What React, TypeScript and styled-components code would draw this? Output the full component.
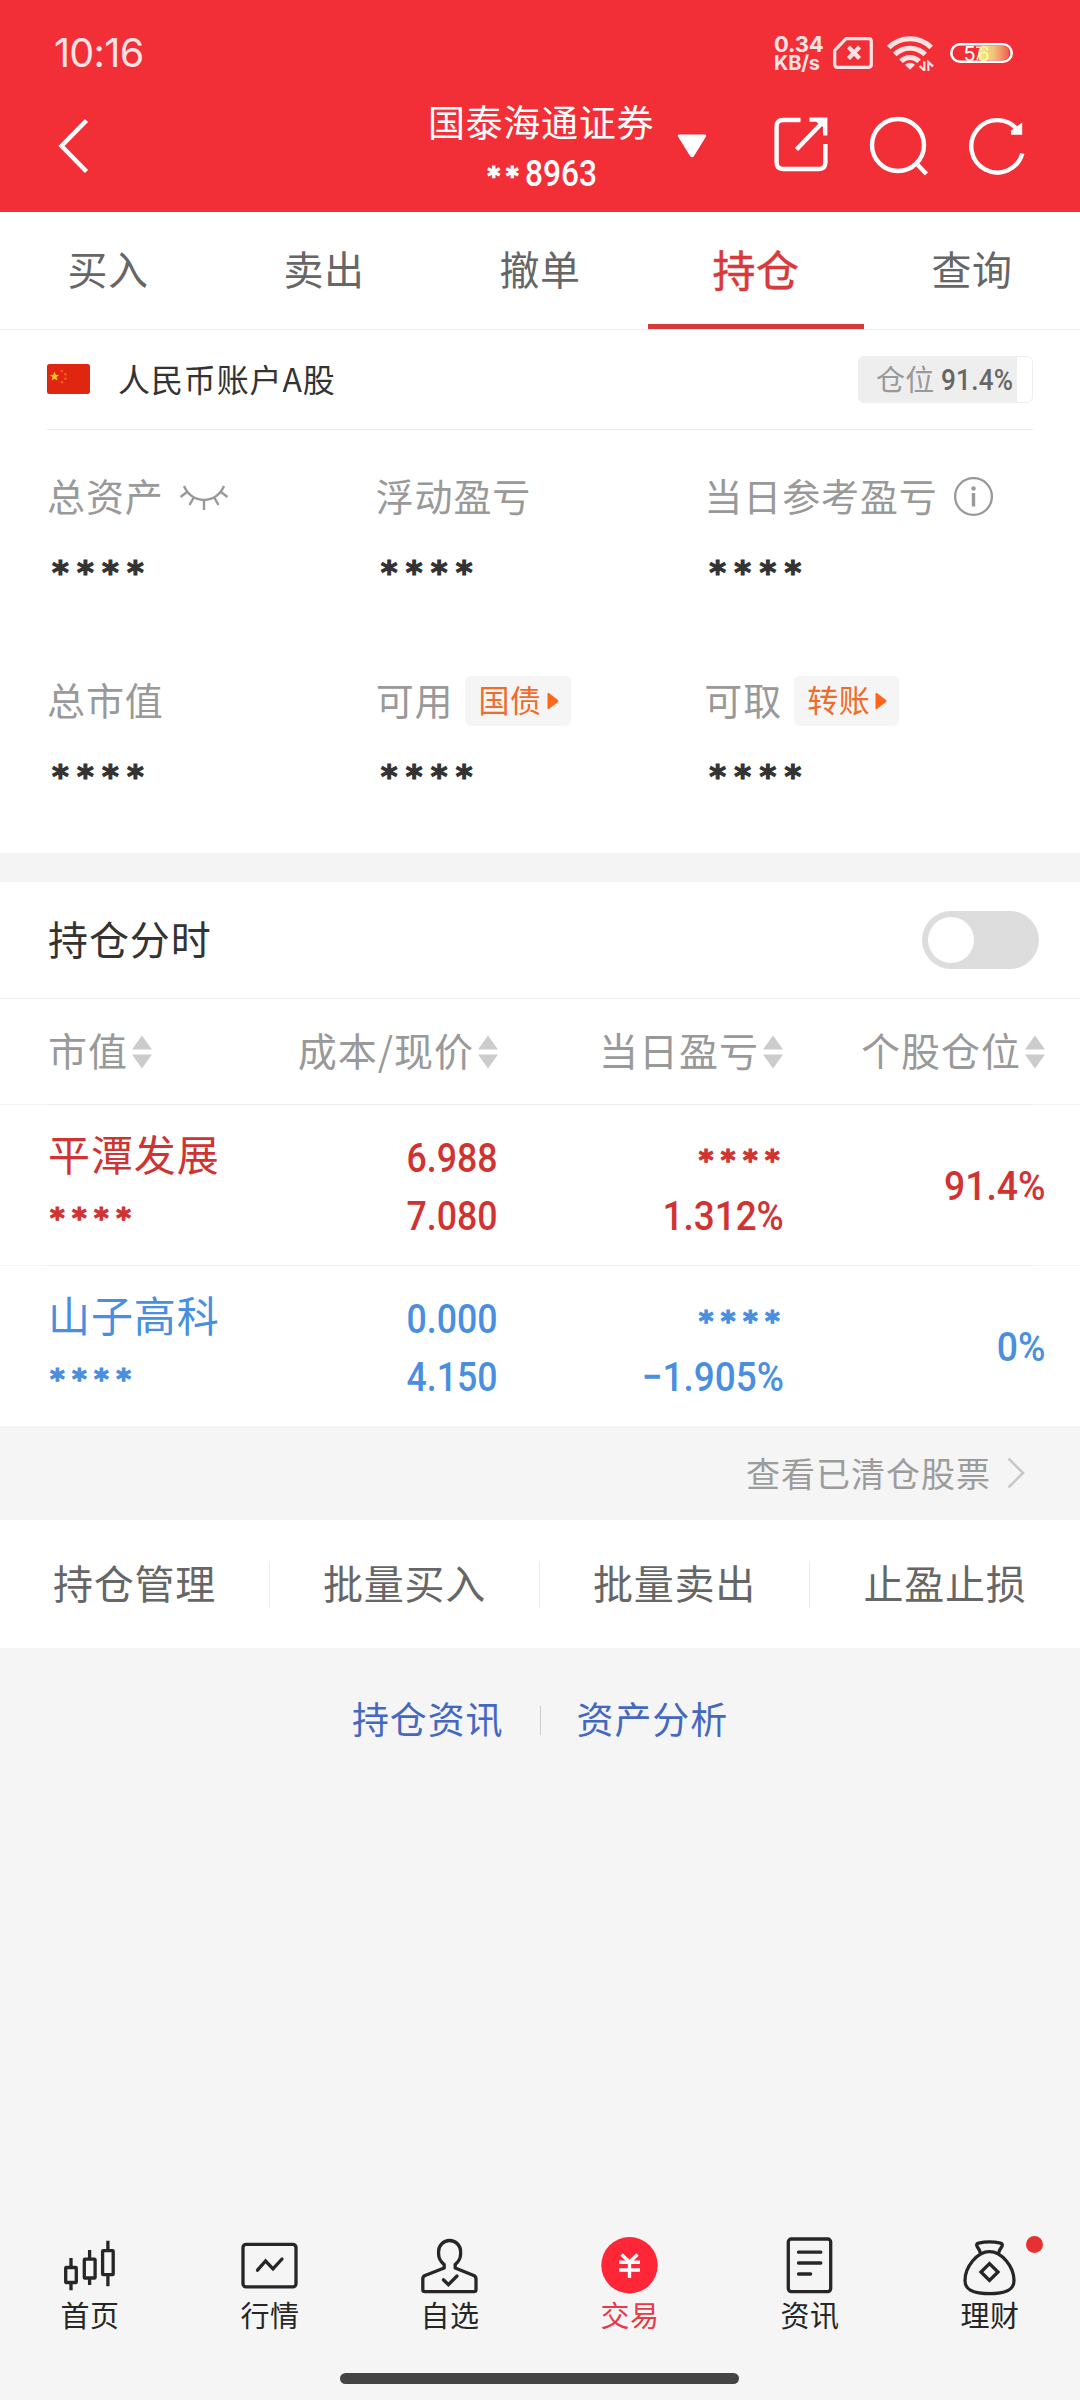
import React from "react";
import styled, { createGlobalStyle } from "styled-components";

const CJK = '"Noto Sans CJK SC", sans-serif';
const UI = 'Inter, "Noto Sans CJK SC", sans-serif';
const DIGITS = 'Roboto, "Noto Sans CJK SC", sans-serif';

const GlobalStyle = createGlobalStyle`
  * { box-sizing: border-box; }
  body { margin: 0; background: #f5f5f5; font-family: ${CJK}; font-weight: 400; }
  svg { display: block; flex: none; }
`;

const Page = styled.div`
  width: 1080px;
  height: 2400px;
  display: flex;
  flex-direction: column;
  background: #f5f5f5;
  white-space: nowrap;
`;

/* ---------- header ---------- */
const Header = styled.header`
  height: 212px;
  background: #f22f37;
  color: #fff;
`;
const StatusBar = styled.div`
  height: 80px;
  padding: 27px 67px 0 54px;
  display: flex;
  justify-content: space-between;
  color: #ffe3e4;
  font-family: ${UI};
`;
const Clock = styled.span`
  font-size: 39.5px;
  line-height: 52px;
  letter-spacing: -0.7px;
`;
const StatusIcons = styled.div`
  display: flex;
  height: 52px;
  align-items: center;
  padding-bottom: 1px;
`;
const Speed = styled.div`
  display: flex;
  flex-direction: column;
  width: 59px;
  font-weight: 700;
  padding-top: 2px;
`;
const SpeedValue = styled.span`
  font-size: 22px;
  line-height: 19px;
  letter-spacing: -0.2px;
`;
const SpeedUnit = styled.span`
  font-size: 20px;
  line-height: 19px;
  letter-spacing: -0.2px;
`;
const TitleBar = styled.div`
  height: 132px;
  display: grid;
  grid-template-columns: 430px 222px 1fr;
  align-items: center;
`;
const BackSlot = styled.div`
  padding-left: 56px;
`;
const Titles = styled.div`
  display: flex;
  flex-direction: column;
  align-items: center;
  height: 132px;
  padding-top: 16px;
`;
const Broker = styled.span`
  font-size: 37px;
  line-height: 50px;
  letter-spacing: 0.7px;
`;
const AccountNo = styled.span`
  display: flex;
  align-items: center;
  font-family: ${DIGITS};
  font-size: 36px;
  line-height: 50px;
  font-weight: 500;
  margin-top: 3px;
  padding-left: 12px;
`;
const HeadActions = styled.div`
  display: flex;
  align-items: center;
  padding-left: 25px;
`;
const ActionIcons = styled.div`
  display: flex;
  gap: 40px;
  margin-left: 67px;
`;

/* ---------- text helpers ---------- */
const Stars = styled.span<{ $size: number; $gap: number }>`
  display: block;
  font-family: "DejaVu Sans", sans-serif;
  font-weight: 700;
  font-size: ${(p) => p.$size}px;
  line-height: 1;
  letter-spacing: ${(p) => p.$gap}px;
  padding-top: 0.2em;
  -webkit-text-stroke: 1.2px currentColor;
`;
const Narrow = styled.span<{ $from?: string; $scale?: number }>`
  display: inline-block;
  font-family: ${DIGITS};
  font-weight: 500;
  transform: scaleX(${(p) => p.$scale ?? 0.87});
  transform-origin: ${(p) => p.$from ?? "right"} center;
`;

/* ---------- tabs ---------- */
const Tabs = styled.nav`
  height: 118px;
  display: grid;
  grid-template-columns: repeat(5, 216px);
  background: #fff;
  border-bottom: 1px solid #ebebeb;
`;
const Tab = styled.div<{ $active?: boolean }>`
  display: flex;
  align-items: center;
  justify-content: center;
  padding-bottom: 1px;
  border-bottom: 5px solid ${(p) => (p.$active ? "#d73a3a" : "transparent")};
  color: ${(p) => (p.$active ? "#d73a3a" : "#666")};
  font-size: ${(p) => (p.$active ? 43 : 40)}px;
  letter-spacing: 0.6px;
  -webkit-text-stroke: ${(p) => (p.$active ? 0.5 : 0)}px currentColor;
`;

/* ---------- account ---------- */
const Account = styled.section`
  height: 523px;
  background: #fff;
  padding: 0 47px;
`;
const AccountHead = styled.div`
  height: 100px;
  display: flex;
  align-items: center;
  border-bottom: 1px solid #ebebeb;
`;
const AccountName = styled.span`
  margin-left: 27px;
  font-size: 32px;
  line-height: 44px;
  letter-spacing: 0.9px;
  color: #333;
  padding-bottom: 4px;
`;
const Position = styled.div<{ $fill: number }>`
  margin-left: auto;
  width: 175px;
  height: 47px;
  border: 1px solid #eee;
  border-radius: 6px;
  background: linear-gradient(to right, #eee ${(p) => p.$fill}%, #fff ${(p) => p.$fill}%);
  display: flex;
  align-items: center;
  padding: 0 0 3px 17px;
  font-size: 29px;
  letter-spacing: 0.3px;
  color: #999;
`;
const PositionValue = styled(Narrow)`
  margin-left: 6px;
  font-size: 30px;
  color: #666;
  padding-top: 2px;
`;
const Metrics = styled.div`
  display: grid;
  grid-template-columns: repeat(3, 1fr);
  grid-auto-rows: 204px;
  padding-top: 42px;
`;
const MetricLabel = styled.div`
  height: 50px;
  display: flex;
  align-items: center;
  font-size: 38px;
  letter-spacing: 0.9px;
  line-height: 50px;
  color: #999;
`;
const LabelText = styled.span`
  padding-bottom: 4px;
`;
const HeadText = styled.span`
  padding-bottom: 6px;
`;
const ClearedText = styled.span`
  padding-bottom: 2px;
`;
const MetricValue = styled.div`
  height: 50px;
  margin-top: 22px;
  padding-left: 5px;
  display: flex;
  align-items: center;
  color: #333;
`;
const IconAfter = styled.span<{ $gap: number }>`
  margin-left: ${(p) => p.$gap}px;
`;
const Chip = styled.span`
  height: 50px;
  margin-left: 12px;
  padding: 0 12px 0 13px;
  display: inline-flex;
  align-items: center;
  gap: 5px;
  border-radius: 6px;
  background: #f5f5f5;
  color: #ee6c2c;
  font-size: 31px;
  letter-spacing: 0.6px;
`;
const Gap = styled.div`
  height: 29px;
  background: #f4f4f4;
`;

/* ---------- holdings ---------- */
const MinuteRow = styled.div`
  height: 117px;
  background: #fff;
  border-bottom: 1px solid #ebebeb;
  display: flex;
  align-items: center;
  justify-content: space-between;
  padding: 0 41px 0 48px;
  font-size: 40px;
  letter-spacing: 0.9px;
  color: #333;
`;
const Switch = styled.div`
  width: 117px;
  height: 58px;
  border-radius: 29px;
  background: #ddd;
  padding: 6px;
`;
const Knob = styled.div`
  width: 46px;
  height: 46px;
  border-radius: 50%;
  background: #fff;
`;
const TableRow = styled.div<{ $h: number; $tone?: string }>`
  height: ${(p) => p.$h}px;
  display: grid;
  grid-template-columns: 230px 220px 285px 262px;
  padding-left: 48px;
  background: #fff;
  color: ${(p) => p.$tone ?? "#999"};
`;
const Rule = styled.div`
  height: 1px;
  background: linear-gradient(to right, #f4f4f4 47px, #ebebeb 47px, #ebebeb 1033px, #f4f4f4 1033px);
`;
const HeadCell = styled.div<{ $left?: boolean }>`
  display: flex;
  align-items: center;
  justify-content: ${(p) => (p.$left ? "flex-start" : "flex-end")};
  gap: 4px;
  font-size: 39px;
  letter-spacing: 1px;
`;
const Cell = styled.div<{ $left?: boolean; $mid?: boolean }>`
  display: flex;
  flex-direction: column;
  align-items: ${(p) => (p.$left ? "flex-start" : "flex-end")};
  justify-content: ${(p) => (p.$mid ? "center" : "flex-start")};
  padding-top: ${(p) => (p.$mid ? 2 : 24)}px;
`;
const Line = styled.div<{ $padL?: number; $shift?: number }>`
  height: 58px;
  display: flex;
  align-items: center;
  padding-left: ${(p) => p.$padL ?? 0}px;
  margin-right: ${(p) => -(p.$shift ?? 0)}px;
  font-size: 41px;
`;
const StockName = styled.span`
  font-size: 42px;
  line-height: 58px;
  letter-spacing: 0.9px;
  padding-bottom: 10px;
`;
const Cleared = styled.div`
  height: 94px;
  display: flex;
  align-items: center;
  justify-content: flex-end;
  gap: 16px;
  padding-right: 55px;
  font-size: 34px;
  letter-spacing: 1px;
  color: #9c9c9c;
`;
const Actions = styled.div`
  height: 128px;
  display: grid;
  grid-template-columns: repeat(4, 270px);
  align-items: center;
  background: #fff;
`;
const Action = styled.div`
  height: 47px;
  line-height: 42px;
  text-align: center;
  font-size: 40px;
  letter-spacing: 0.8px;
  color: #666;
  border-right: 1px solid #ebebeb;
  &:last-child { border-right: 0; }
`;
const Links = styled.div`
  height: 144px;
  display: flex;
  align-items: center;
  justify-content: center;
  gap: 36px;
  color: #4468bf;
  font-size: 37px;
  letter-spacing: 0.9px;
`;
const LinkDivider = styled.div`
  width: 1px;
  height: 29px;
  background: #ccc;
`;

/* ---------- bottom bar ---------- */
const Spacer = styled.div`
  flex: 1;
`;
const BottomNav = styled.nav`
  height: 137px;
  display: grid;
  grid-template-columns: repeat(6, 180px);
`;
const NavItem = styled.div<{ $active?: boolean }>`
  position: relative;
  display: flex;
  flex-direction: column;
  align-items: center;
  color: ${(p) => (p.$active ? "#e8394a" : "#262626")};
  font-size: 29px;
  line-height: 32px;
  letter-spacing: 0.4px;
`;
const Dot = styled.span`
  position: absolute;
  left: 126px;
  top: 0;
  width: 17px;
  height: 17px;
  border-radius: 50%;
  background: #e63032;
`;
const HomeBar = styled.div`
  width: 399px;
  height: 11px;
  margin: 0 0 16px 340px;
  border-radius: 6px;
  background: #444;
`;

/* ---------- drawings ---------- */
const SortIcon = () => (
  <svg width="20" height="34" viewBox="0 0 20 34" fill="#ccc">
    <path d="M10 0.5 20 14.5H0Z" />
    <path d="M0 19.5H20L10 33.5Z" />
  </svg>
);

const SimIcon = () => (
  <svg width="40" height="32" viewBox="0 0 40 32" fill="none" stroke="currentColor" strokeWidth="3.2">
    <path d="M13 1.7H35.5Q38.3 1.7 38.3 4.5V27.5Q38.3 30.3 35.5 30.3H4.5Q1.7 30.3 1.7 27.5V13.5Z" strokeLinejoin="round" />
    <path d="M15.5 10 26.5 21.5M26.5 10 15.5 21.5" strokeWidth="4.2" />
  </svg>
);

const WifiIcon = () => (
  <svg width="47" height="36" viewBox="0 0 47 36" fill="none" stroke="currentColor" strokeWidth="5">
    <path d="M1.8 12.6A30 30 0 0 1 44.2 12.6" />
    <path d="M7.8 19.5A21.5 21.5 0 0 1 38.2 19.5" />
    <path d="M14 26.2A12.6 12.6 0 0 1 32 26.2" />
    <path d="M23 34.8 18 29.8A7 7 0 0 1 28 29.8Z" fill="currentColor" stroke="none" />
    <path d="M37.3 26.5V35.4L32.5 31M41.3 36V27L46 31.4" strokeWidth="2.2" />
  </svg>
);

const BatteryIcon = () => (
  <svg width="63" height="36" viewBox="0 -8 63 36">
    <defs>
      <linearGradient id="charge" x1="0" x2="1">
        <stop offset="0" stopColor="#f2eb8c" />
        <stop offset="0.5" stopColor="#f0c479" />
        <stop offset="1" stopColor="#f0604f" />
      </linearGradient>
    </defs>
    <path d="M33 3H53Q59 3.5 59 10T53 17H28.5Z" fill="url(#charge)" />
    <path d="M26 4.2H32L27 16.6" fill="none" stroke="#fff" strokeWidth="1.6" />
    <rect x="1.3" y="1.3" width="60.4" height="17.4" rx="8.7" fill="none" stroke="#fff" strokeWidth="2.6" />
    <text x="13.5" y="17.6" fontFamily="Inter, sans-serif" fontSize="20" letterSpacing="1.6" fill="#fff">
      5<tspan fill="#f4ff9c">6</tspan>
    </text>
  </svg>
);

const BackIcon = () => (
  <svg width="34" height="56" viewBox="0 0 34 56" fill="none" stroke="#fff" strokeWidth="4.4">
    <path d="M30.5 2.5 5.5 28 30.5 53.5" />
  </svg>
);

const ShareIcon = () => (
  <svg width="54" height="56" viewBox="0 0 54 56" fill="none" stroke="#fff" strokeWidth="4.4">
    <path d="M26.5 4H9Q2.6 4 2.6 10.4V46.6Q2.6 53 9 53H45Q51.4 53 51.4 46.6V28" />
    <path d="M22.5 33.5 47.5 7.5" />
    <path d="M35.5 1.6H53.4V19.5H49V11L42 5.8H35.5Z" fill="#fff" stroke="none" />
  </svg>
);

const SearchIcon = () => (
  <svg width="60" height="60" viewBox="0 0 60 60" fill="none" stroke="#fff" strokeWidth="4.4">
    <circle cx="30" cy="29" r="26" />
    <path d="M47.5 46.5 58.5 58" />
  </svg>
);

const RefreshIcon = () => (
  <svg width="58" height="60" viewBox="0 0 58 60" fill="none" stroke="#fff" strokeWidth="4.4">
    <path d="M54.3 37.5A26 26.2 0 1 1 50 14.5" />
    <path d="M54.2 6.5V18.8H43V14.6Z" fill="#fff" stroke="none" />
  </svg>
);

const CaretIcon = () => (
  <svg width="30" height="24" viewBox="0 0 30 24">
    <path d="M2.3 0.5H27.7Q30 0.7 28.7 3L17 22Q15 24.6 13 22L1.3 3Q0 0.7 2.3 0.5Z" fill="#fff" />
  </svg>
);

const FlagIcon = () => (
  <svg width="44" height="32" viewBox="0 0 44 32">
    <rect x="0" width="43" height="30" rx="2.5" fill="#e02611" />
    <path d="M7.5 7.4 8.8 10.8 12 11 9.5 13.2 10.4 16.6 7.5 14.7 4.6 16.6 5.5 13.2 3 11 6.2 10.8Z" fill="#fcc419" />
    <g fill="#f2601c">
      <circle cx="14.8" cy="7" r="1.3" />
      <circle cx="18.4" cy="10.3" r="1.3" />
      <circle cx="18.4" cy="14.8" r="1.3" />
      <circle cx="15" cy="18.2" r="1.3" />
    </g>
  </svg>
);

const EyeClosedIcon = () => (
  <svg width="50" height="28" viewBox="0 0 50 28" fill="none" stroke="#999" strokeWidth="2.4">
    <path d="M5 3Q11 16.5 25 17Q39 16.5 45 3" />
    <path d="M8 9 1.5 14M42 9 48.5 14M14.5 15 10.5 22M35.5 15 39.5 22M25 17V27" />
  </svg>
);

const InfoIcon = () => (
  <svg width="40" height="40" viewBox="0 0 40 40" fill="none" stroke="#999">
    <circle cx="20.5" cy="19.5" r="18.4" strokeWidth="2.3" />
    <path d="M20.5 16V29.5" strokeWidth="3.4" />
    <circle cx="20.5" cy="11.5" r="2.2" fill="#999" stroke="none" />
  </svg>
);

const PlayIcon = () => (
  <svg width="12" height="18" viewBox="0 0 12 18">
    <path d="M0.5 2Q0.5 0 2.2 1.3L11 8Q12 9 11 10L2.2 16.8Q0.5 18 0.5 16Z" fill="#ff661a" />
  </svg>
);

const ChevronIcon = () => (
  <svg width="18" height="32" viewBox="0 0 18 32" fill="none" stroke="#c8c8c8" strokeWidth="2.6">
    <path d="M1.5 1.5 16 16 1.5 30.5" />
  </svg>
);

const NavSvg = ({ children }: { children: React.ReactNode }) => (
  <svg width="64" height="62" viewBox="0 0 64 62" fill="none" stroke="#262626" strokeWidth="3.3" strokeLinejoin="round" strokeLinecap="round">
    {children}
  </svg>
);

const CandlesIcon = () => (
  <NavSvg>
    <g strokeLinecap="butt">
      <rect x="7.7" y="31.5" width="10.6" height="15" rx="0.6" />
      <path d="M13 22V31M13 47V54.3" />
      <rect x="26.3" y="23.2" width="10.8" height="18.8" rx="0.6" />
      <path d="M31.6 14V23M31.6 42V49" />
      <rect x="44.6" y="14.7" width="10.6" height="24" rx="0.6" />
      <path d="M49.9 4.7V14M49.9 39V50.3" />
    </g>
  </NavSvg>
);

const QuotesIcon = () => (
  <NavSvg>
    <rect x="5" y="8.3" width="53" height="42.6" rx="3.2" />
    <path d="M19.5 34.2 27.6 25 35 32.8 44 23" strokeLinejoin="miter" />
  </NavSvg>
);

const WatchIcon = () => (
  <NavSvg>
    <path d="M26.2 32 7 39.5Q4.8 40.5 4.8 43V53.5Q4.8 55.7 7 55.7H55.8Q58 55.7 58 53.5V43Q58 40.5 55.8 39.5L37.2 32V28.6Q42.6 24 42.6 18V15.5A11 11 0 0 0 20.6 15.5V18Q20.6 24 26.2 28.6Z" />
    <path d="M25.4 43.8 30.4 48.6 39 40" strokeLinejoin="miter" />
  </NavSvg>
);

const TradeIcon = () => (
  <NavSvg>
    <circle cx="31.5" cy="29.3" r="28.2" fill="#ff2637" stroke="none" />
    <g stroke="#fff" strokeWidth="3.4" strokeLinecap="butt">
      <path d="M23.6 18.5 31.5 26 39.5 18.5" />
      <path d="M21.2 26.3H42M21.2 34H42M31.5 25V42" />
    </g>
  </NavSvg>
);

const NewsIcon = () => (
  <NavSvg>
    <rect x="10.3" y="3" width="42.4" height="52.6" rx="3" />
    <path d="M20.5 16.2H42.8M20.5 27H42.8M20.5 38H32.6" />
  </NavSvg>
);

const WealthIcon = () => (
  <NavSvg>
    <path d="M22.6 17.5Q21.5 13.5 19.2 10.6Q17.6 8 20.6 7.2Q31.5 4.6 42.4 7.2Q45.4 8 43.8 10.6Q41.5 13.5 40.4 17.5" />
    <path d="M31.5 15.6C19 15.6 7 31 7 44.5C7 54.5 16 57.7 31.5 57.7S56 54.5 56 44.5C56 31 44 15.6 31.5 15.6Z" />
    <path d="M31.5 27.6 40 36 31.5 44.4 23 36Z" strokeLinejoin="miter" />
  </NavSvg>
);

/* ---------- data ---------- */
const tabs = ["买入", "卖出", "撤单", "持仓", "查询"];

const metrics: { label: string; icon?: React.ReactNode; gap?: number; chip?: string }[] = [
  { label: "总资产", icon: <EyeClosedIcon />, gap: 15 },
  { label: "浮动盈亏" },
  { label: "当日参考盈亏", icon: <InfoIcon />, gap: 15 },
  { label: "总市值" },
  { label: "可用", chip: "国债" },
  { label: "可取", chip: "转账" },
];

const columns = ["市值", "成本/现价", "当日盈亏", "个股仓位"];

const holdings = [
  { name: "平潭发展", cost: "6.988", price: "7.080", rate: "1.312%", share: "91.4%", tone: "#cf3433" },
  { name: "山子高科", cost: "0.000", price: "4.150", rate: "−1.905%", share: "0%", tone: "#4a8fdf" },
];

const navItems = [
  { label: "首页", icon: <CandlesIcon /> },
  { label: "行情", icon: <QuotesIcon /> },
  { label: "自选", icon: <WatchIcon /> },
  { label: "交易", icon: <TradeIcon />, active: true },
  { label: "资讯", icon: <NewsIcon /> },
  { label: "理财", icon: <WealthIcon />, dot: true },
];

export default function App() {
  return (
    <Page>
      <GlobalStyle />
      <Header>
        <StatusBar>
          <Clock>10:16</Clock>
          <StatusIcons>
            <Speed>
              <SpeedValue>0.34</SpeedValue>
              <SpeedUnit>KB/s</SpeedUnit>
            </Speed>
            <SimIcon />
            <IconAfter $gap={14}><WifiIcon /></IconAfter>
            <IconAfter $gap={16}><BatteryIcon /></IconAfter>
          </StatusIcons>
        </StatusBar>
        <TitleBar>
          <BackSlot><BackIcon /></BackSlot>
          <Titles>
            <Broker>国泰海通证券</Broker>
            <AccountNo>
              <Stars $size={24} $gap={6}>**</Stars>
              <Narrow $from="left" $scale={0.88}>8963</Narrow>
            </AccountNo>
          </Titles>
          <HeadActions>
            <CaretIcon />
            <ActionIcons>
              <ShareIcon />
              <SearchIcon />
              <RefreshIcon />
            </ActionIcons>
          </HeadActions>
        </TitleBar>
      </Header>

      <Tabs>
        {tabs.map((t) => (
          <Tab key={t} $active={t === "持仓"}>{t}</Tab>
        ))}
      </Tabs>

      <Account>
        <AccountHead>
          <FlagIcon />
          <AccountName>人民币账户A股</AccountName>
          <Position $fill={91.4}>
            仓位
            <PositionValue $from="left">91.4%</PositionValue>
          </Position>
        </AccountHead>
        <Metrics>
          {metrics.map((m) => (
            <div key={m.label}>
              <MetricLabel>
                <LabelText>{m.label}</LabelText>
                {m.icon && <IconAfter $gap={m.gap ?? 0}>{m.icon}</IconAfter>}
                {m.chip && (
                  <Chip>
                    <LabelText>{m.chip}</LabelText>
                    <PlayIcon />
                  </Chip>
                )}
              </MetricLabel>
              <MetricValue><Stars $size={32} $gap={8.3}>****</Stars></MetricValue>
            </div>
          ))}
        </Metrics>
      </Account>

      <Gap />

      <MinuteRow>
        <LabelText>持仓分时</LabelText>
        <Switch><Knob /></Switch>
      </MinuteRow>

      <TableRow $h={105}>
        {columns.map((c, i) => (
          <HeadCell key={c} $left={i === 0}>
            <HeadText>{c}</HeadText>
            <SortIcon />
          </HeadCell>
        ))}
      </TableRow>
      {holdings.map((h) => (
        <React.Fragment key={h.name}>
          <Rule />
          <TableRow $h={160} $tone={h.tone}>
            <Cell $left>
              <Line><StockName>{h.name}</StockName></Line>
              <Line $padL={2}><Stars $size={28} $gap={7.4}>****</Stars></Line>
            </Cell>
            <Cell>
              <Line><Narrow>{h.cost}</Narrow></Line>
              <Line><Narrow>{h.price}</Narrow></Line>
            </Cell>
            <Cell>
              <Line $shift={4}><Stars $size={28} $gap={7.4}>****</Stars></Line>
              <Line $shift={1}><Narrow $scale={0.9}>{h.rate}</Narrow></Line>
            </Cell>
            <Cell $mid>
              <Line><Narrow $scale={0.91}>{h.share}</Narrow></Line>
            </Cell>
          </TableRow>
        </React.Fragment>
      ))}

      <Cleared>
        <ClearedText>查看已清仓股票</ClearedText>
        <ChevronIcon />
      </Cleared>

      <Actions>
        {["持仓管理", "批量买入", "批量卖出", "止盈止损"].map((a) => (
          <Action key={a}>{a}</Action>
        ))}
      </Actions>

      <Links>
        <LabelText>持仓资讯</LabelText>
        <LinkDivider />
        <LabelText>资产分析</LabelText>
      </Links>

      <Spacer />

      <BottomNav>
        {navItems.map((n) => (
          <NavItem key={n.label} $active={n.active}>
            {n.icon}
            {n.label}
            {n.dot && <Dot />}
          </NavItem>
        ))}
      </BottomNav>
      <HomeBar />
    </Page>
  );
}
